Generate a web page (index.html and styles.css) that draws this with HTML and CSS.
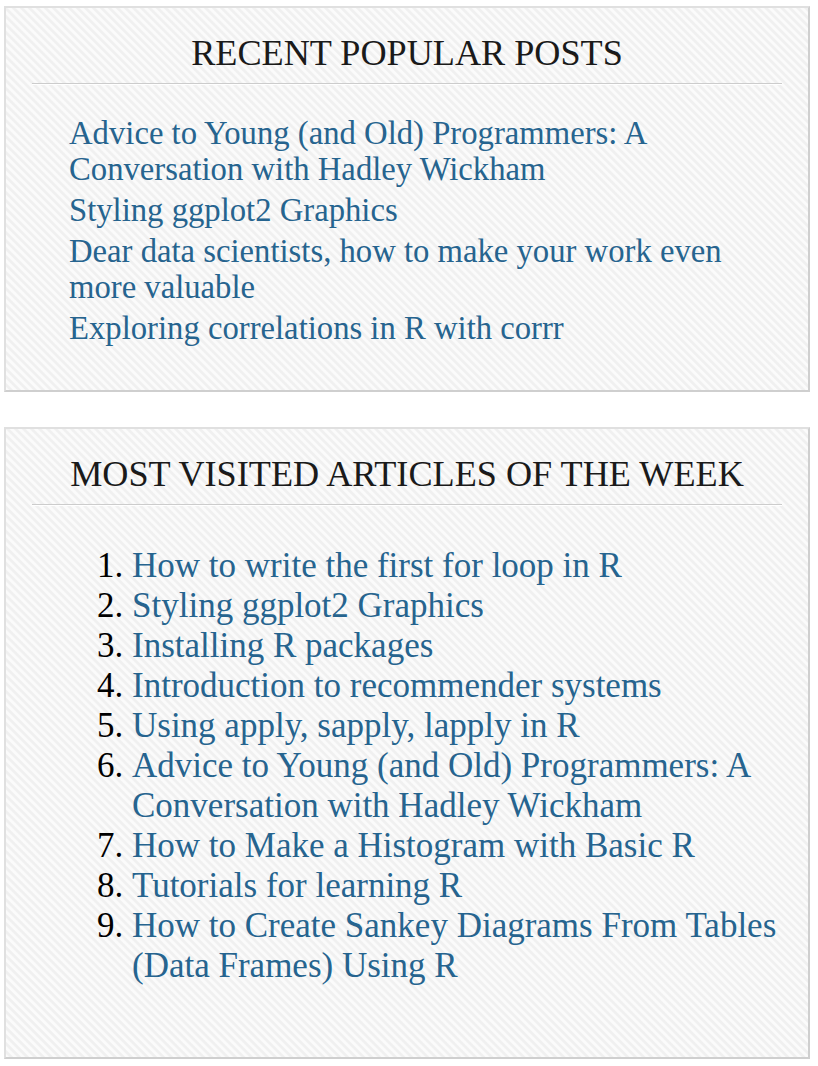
FILE: index.html
```html
<!DOCTYPE html>
<html lang="en">
<head>
<meta charset="utf-8">
<title>Widgets</title>
<link rel="stylesheet" href="styles.css">
</head>
<body>
<section class="widget widget-recent">
  <h2 class="widget-title">RECENT POPULAR POSTS</h2>
  <ul class="post-list">
    <li><a href="#">Advice to Young (and Old) Programmers: A Conversation with Hadley Wickham</a></li>
    <li><a href="#">Styling ggplot2 Graphics</a></li>
    <li><a href="#">Dear data scientists, how to make your work even more valuable</a></li>
    <li><a href="#">Exploring correlations in R with corrr</a></li>
  </ul>
</section>
<section class="widget widget-visited">
  <h2 class="widget-title">MOST VISITED ARTICLES OF THE WEEK</h2>
  <ol class="article-list">
    <li><a href="#">How to write the first for loop in R</a></li>
    <li><a href="#">Styling ggplot2 Graphics</a></li>
    <li><a href="#">Installing R packages</a></li>
    <li><a href="#">Introduction to recommender systems</a></li>
    <li><a href="#">Using apply, sapply, lapply in R</a></li>
    <li><a href="#">Advice to Young (and Old) Programmers: A Conversation with Hadley Wickham</a></li>
    <li><a href="#">How to Make a Histogram with Basic R</a></li>
    <li><a href="#">Tutorials for learning R</a></li>
    <li><a href="#">How to Create Sankey Diagrams From Tables (Data Frames) Using R</a></li>
  </ol>
</section>
</body>
</html>
```
FILE: styles.css
```css
html, body {
  margin: 0;
  padding: 0;
  background: #ffffff;
}

body {
  padding: 6px 8px 0 4px;
  font-family: "Liberation Serif", "Times New Roman", serif;
  color: #111;
}

.widget {
  border: 2px solid #e0e0e0;
  border-right-color: #cfcfcf;
  border-bottom-color: #cfcfcf;
  background-color: #f7f7f7;
  background-image: repeating-linear-gradient(45deg,
    #fbfbfb 0px, #fbfbfb 1.8px,
    #f0f0f0 2.9px, #f0f0f0 4.6px,
    #fbfbfb 5.66px);
  padding: 22px 26px 0 26px;
}

.widget-recent {
  padding-bottom: 44px;
}

.widget-visited {
  margin-top: 35px;
  padding-bottom: 71px;
}

.widget-title {
  margin: 0;
  font-family: "Liberation Serif", "Times New Roman", serif;
  font-weight: normal;
  font-size: 36.2px;
  line-height: 46px;
  color: #1a1a1a;
  text-align: center;
  padding-bottom: 7px;
  border-bottom: 1px solid #cccccc;
  box-shadow: 0 1px 0 #ffffff;
}

.post-list {
  list-style: none;
  margin: 31px 0 0 0;
  padding: 0 0 0 37px;
  font-size: 32.7px;
  line-height: 36px;
}

.post-list li + li {
  margin-top: 5px;
}

.article-list {
  margin: 41px 0 0 0;
  padding: 0 0 0 100px;
  font-size: 35px;
  line-height: 40px;
  color: #000;
}

a {
  color: #26648f;
  text-decoration: none;
}
```
